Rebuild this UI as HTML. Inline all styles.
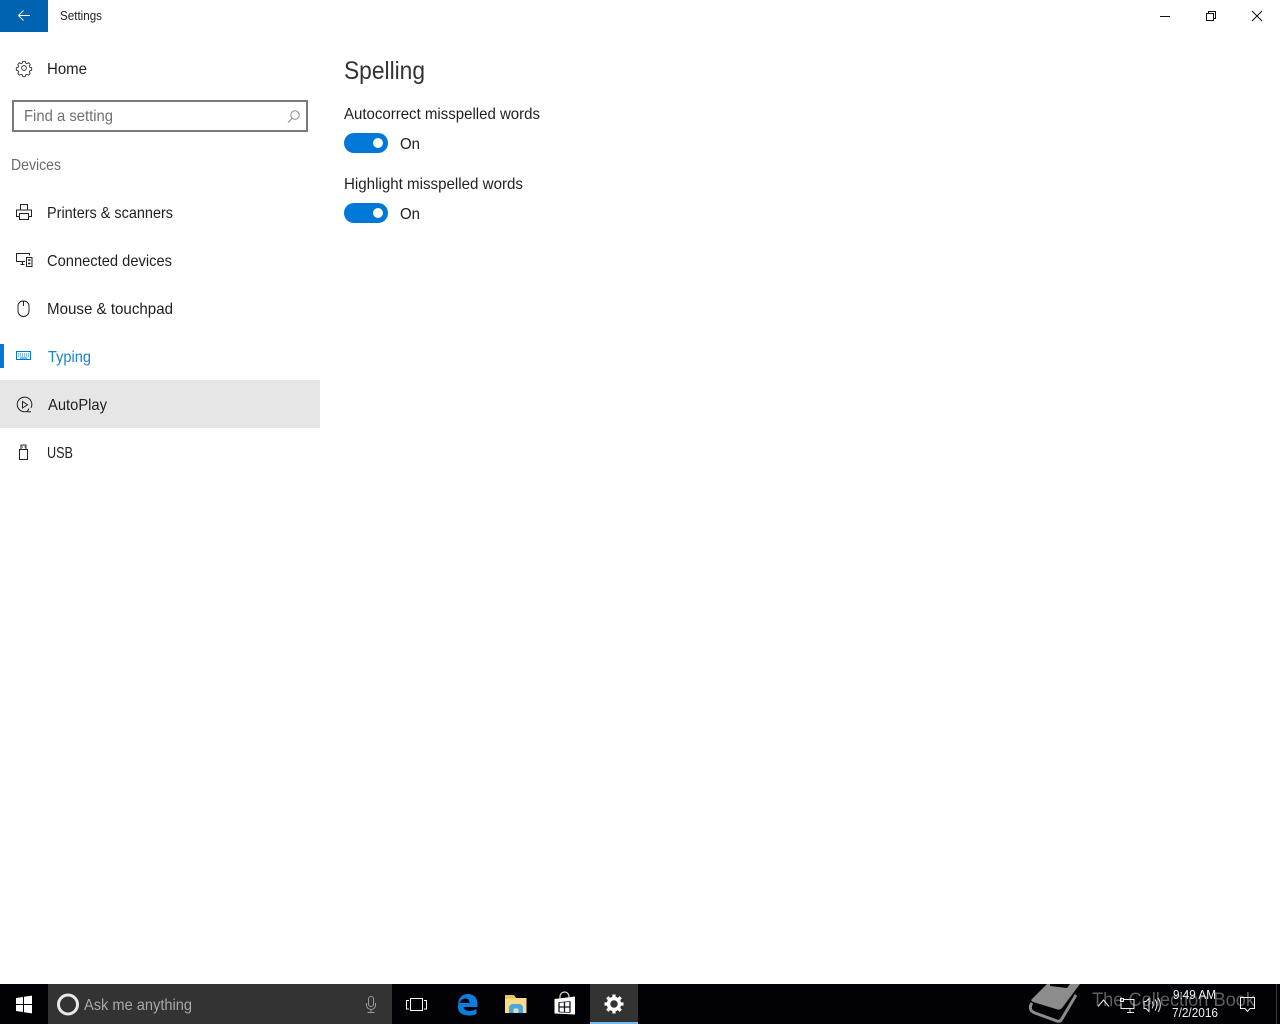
<!DOCTYPE html>
<html><head><meta charset="utf-8"><title>Settings</title>
<style>
html,body{margin:0;padding:0;background:#fff;width:1280px;height:1024px;overflow:hidden}
svg{display:block}
text{font-family:"Liberation Sans",sans-serif;font-size:16px;fill:#1f1f1f}
</style></head><body>
<svg width="1280" height="1024" viewBox="0 0 1280 1024" xmlns="http://www.w3.org/2000/svg">
<rect width="1280" height="1024" fill="#fff"/>
<!-- title bar -->
<rect width="48" height="32" fill="#0063b1"/>
<path d="M18.500 15.500H30M18.500 15.500l5-5M18.500 15.500l5 5" fill="none" stroke="#fff" stroke-width="1.100"/>
<text x="60" y="20" style="font-size:12.500px" textLength="42" lengthAdjust="spacingAndGlyphs">Settings</text>
<path d="M1160 16.500h10" stroke="#111" stroke-width="1"/>
<path d="M1206.500 13.500h7v7h-7zM1208.500 13.500v-2h7v7h-2" fill="none" stroke="#111" stroke-width="1"/>
<path d="M1252 11l10 10M1262 11l-10 10" stroke="#111" stroke-width="1"/>
<!-- home -->
<g fill="none" stroke="#333" stroke-width="1.100" transform="translate(24 68) scale(.84) translate(-24 -68)">
<circle cx="24" cy="68" r="2.800"/>
<path d="M22.500 60.500h3l.5 2 1.600.700 1.800-1 2 2.100-1 1.800.700 1.600 2 .5v3l-2 .5-.700 1.600 1 1.800-2 2-1.800-1-1.600.700-.5 2h-3l-.5-2-1.600-.700-1.800 1-2-2 1-1.800-.700-1.600-2-.5v-3l2-.5.700-1.600-1-1.800 2-2.100 1.800 1 1.600-.700z" transform="translate(0 -.5)"/>
</g>
<text x="47" y="74" textLength="40" lengthAdjust="spacingAndGlyphs">Home</text>
<!-- search -->
<rect x="13" y="101" width="294" height="30" fill="#fff" stroke="#7a7a7a" stroke-width="2"/>
<text x="24" y="121" style="fill:#707070" textLength="89" lengthAdjust="spacingAndGlyphs">Find a setting</text>
<circle cx="295" cy="115" r="4.200" fill="none" stroke="#8a8a8a"/>
<path d="M292 118.500l-4 4" stroke="#8a8a8a"/>
<text x="11" y="170" style="fill:#6b6b6b" textLength="50" lengthAdjust="spacingAndGlyphs">Devices</text>
<!-- printers -->
<g fill="none" stroke="#222" stroke-width="1">
<path d="M20.500 210v-5.500h7v5.500M19.500 216.500h-3v-6.500h15v6.500h-3"/>
<rect x="19.500" y="213.500" width="9" height="6"/>
</g>
<text x="47" y="218" textLength="126" lengthAdjust="spacingAndGlyphs">Printers &amp; scanners</text>
<!-- connected -->
<g fill="none" stroke="#222" stroke-width="1">
<path d="M25 261.500h-8.500v-8h13v2M20.500 264.500h4M22.500 261.500v3"/>
<rect x="26.500" y="257.500" width="5.500" height="9"/>
<path d="M28 260h2.500M28 263.500h2.500" stroke-width="1.500"/>
</g>
<text x="47" y="266" textLength="125" lengthAdjust="spacingAndGlyphs">Connected devices</text>
<!-- mouse -->
<path d="M23.500 301h1a5 5 0 0 1 5 5v5a5.500 5.500 0 0 1-11 0v-5a5 5 0 0 1 5-5zM24 301v5" transform="translate(-.5 0)" fill="none" stroke="#222"/>
<text x="47" y="314" textLength="126" lengthAdjust="spacingAndGlyphs">Mouse &amp; touchpad</text>
<!-- typing -->
<rect x="0" y="344" width="4" height="24" fill="#0078d7"/>
<rect x="16.500" y="351.500" width="14" height="8" fill="none" stroke="#0078d7"/>
<path d="M18 354h11M18 356h11" stroke="#0078d7" stroke-dasharray="1 1"/>
<path d="M20 358h7" stroke="#0078d7"/>
<text x="48" y="362" style="fill:#1a82d6" textLength="43" lengthAdjust="spacingAndGlyphs">Typing</text>
<!-- autoplay -->
<rect x="0" y="380" width="320" height="48" fill="#e6e6e6"/>
<path d="M27 411.300a7.300 7.300 0 1 1 4-3.500M29 408.500l-1.800 3.200h3.800" fill="none" stroke="#222"/>
<path d="M22.500 401.500v6.500l5-3.250z" fill="none" stroke="#222"/>
<text x="48" y="410" textLength="59" lengthAdjust="spacingAndGlyphs">AutoPlay</text>
<!-- usb -->
<g fill="none" stroke="#222"><rect x="19.500" y="449.500" width="8" height="10"/><path d="M21 449.500v-4.500h5v4.500"/></g>
<path d="M22 447h1M24.500 447h1" stroke="#222"/>
<text x="47" y="458" textLength="26" lengthAdjust="spacingAndGlyphs">USB</text>
<!-- content -->
<text x="344" y="79" style="font-size:25px;fill:#333" textLength="81" lengthAdjust="spacingAndGlyphs">Spelling</text>
<text x="344" y="119" textLength="196" lengthAdjust="spacingAndGlyphs">Autocorrect misspelled words</text>
<rect x="344" y="133" width="44" height="20" rx="10" fill="#0078d7"/>
<circle cx="378" cy="143" r="5" fill="#fff"/>
<text x="400" y="149" textLength="20" lengthAdjust="spacingAndGlyphs">On</text>
<text x="344" y="189" textLength="179" lengthAdjust="spacingAndGlyphs">Highlight misspelled words</text>
<rect x="344" y="203" width="44" height="20" rx="10" fill="#0078d7"/>
<circle cx="378" cy="213" r="5" fill="#fff"/>
<text x="400" y="219" textLength="20" lengthAdjust="spacingAndGlyphs">On</text>
<!-- taskbar -->
<rect x="0" y="984" width="1280" height="40" fill="#020206"/>
<path d="M16 998l7-1v7h-7zM24 996.800l8-1.200v8.400h-8zM16 1005h7v7l-7-1zM24 1005h8v8.400l-8-1.200z" fill="#fff"/>
<rect x="48" y="984" width="344" height="40" fill="#333"/>
<circle cx="68" cy="1004.500" r="9.500" fill="none" stroke="#e8e8e8" stroke-width="3"/>
<text x="84" y="1010" style="fill:#a8a8a8" textLength="108" lengthAdjust="spacingAndGlyphs">Ask me anything</text>
<g fill="none" stroke="#9a9a9a"><rect x="368.500" y="996.500" width="5" height="10" rx="2.500"/><path d="M366.500 1003v2a4.500 4.500 0 0 0 9 0v-2M371 1009.500v3M367.500 1012.500h7"/></g>
<!-- task view -->
<g fill="none" stroke="#fff"><rect x="410.500" y="998.500" width="12" height="12"/><path d="M409 1000.500h-2.500v8.500h2.500M424 1000.500h2.500v8.500H424"/></g>
<!-- edge -->
<path d="M458 1005c0-7 4-11 10-11 6 0 9.500 4 9.500 10v3h-14c.5 4 6.500 5.500 13 2v5c-8 3.500-18.500 1-18.500-6.500 0-4 2-6.500 5-8-1.500 1-2.500 2-3 3.500h9.500c0-3-1.500-4.500-4-4.500-3.500 0-6 2.500-7.500 6.500z" fill="#0a7fdc"/>
<!-- explorer -->
<path d="M505 995h9l2 3h10.500V1013H505z" fill="#f7dc8b"/>
<path d="M505 995h9l1.500 3.500H505z" fill="#e9c55f"/>
<path d="M509 1013v-5a4 4 0 0 1 4-4h6a4 4 0 0 1 4 4v5h-4.500v-3.500a1 1 0 0 0-1-1h-3a1 1 0 0 0-1 1v3.500z" fill="#4aa6dc"/>
<rect x="513.500" y="1010" width="5" height="3" fill="#bfe0f0"/>
<!-- store -->
<path d="M554.500 999l20.500-2.500V1014.500l-20.500-1z" fill="#fff"/>
<path d="M560 999v-2.500a4.500 4.500 0 0 1 9 0V998" fill="none" stroke="#ddd" stroke-width="1.200"/>
<path d="M559 1002.500v9.500M564.500 1002v10M570 1001.500v11M559 1007h11" stroke="#15151a" stroke-width="1.300" fill="none"/>
<path d="M559 1002.500l11-1M559 1012l11 .5" stroke="#15151a" stroke-width=".8" fill="none"/>
<!-- settings -->
<rect x="590" y="984" width="48" height="40" fill="#333"/>
<rect x="590" y="1022" width="48" height="2" fill="#76b9ed"/>
<circle cx="614" cy="1004" r="5.500" fill="none" stroke="#fff" stroke-width="3.500"/>
<path d="M614 994.500v4M614 1009.500v4M604.500 1004h4M619.500 1004h4M607.300 997.300l2.800 2.800M617.900 1007.900l2.800 2.800M620.700 997.300l-2.800 2.800M610.100 1007.900l-2.800 2.800" stroke="#fff" stroke-width="3.200"/>
<!-- watermark -->
<path d="M1047 984H1080L1062 1008C1060 1010 1058 1010 1056 1009L1033 1002C1031 1001 1031 1000 1032 999z" fill="#8c8c8c"/>
<path d="M1050 984H1070L1067 988 1050 986z" fill="#020206"/>
<path d="M1032 1003c-3 4-2 8 3 10l22 8c2 .6 3.500 .2 4.500-1.500L1076 995" fill="none" stroke="#8c8c8c" stroke-width="3"/>
<text x="1092" y="1006" style="font-size:19px;fill:#5e5e5e" textLength="163" lengthAdjust="spacingAndGlyphs">The Collection Book</text>
<!-- tray -->
<path d="M1098 1006.500l5.500-6.500 5.500 6.500" fill="none" stroke="#eee"/>
<g fill="none" stroke="#eee"><path d="M1124 999.500h10v9h-13v-6M1127 1012.500h7M1130 1008.500v4"/><rect x="1120.500" y="998.500" width="3" height="3"/></g>
<path d="M1144 1001.500h2l3-3v13l-3-3h-2zM1152 1001.500c1.500 2 1.500 5 0 7M1155 999.500c2.500 3 2.500 8 0 11M1158 998c3 4 3 10 0 14" fill="none" stroke="#eee"/>
<text x="1173" y="999" style="font-size:12.500px;fill:#f2f2f2" textLength="43" lengthAdjust="spacingAndGlyphs">9:49 AM</text>
<text x="1172" y="1017" style="font-size:12.500px;fill:#f2f2f2" textLength="46" lengthAdjust="spacingAndGlyphs">7/2/2016</text>
<path d="M1240.500 997.500h14v11h-4.500l-2.500 3-2.500-3h-4.500z" fill="none" stroke="#eee"/>
<rect x="1276" y="984" width="1" height="40" fill="#3a3a3a"/>
</svg>
</body></html>
